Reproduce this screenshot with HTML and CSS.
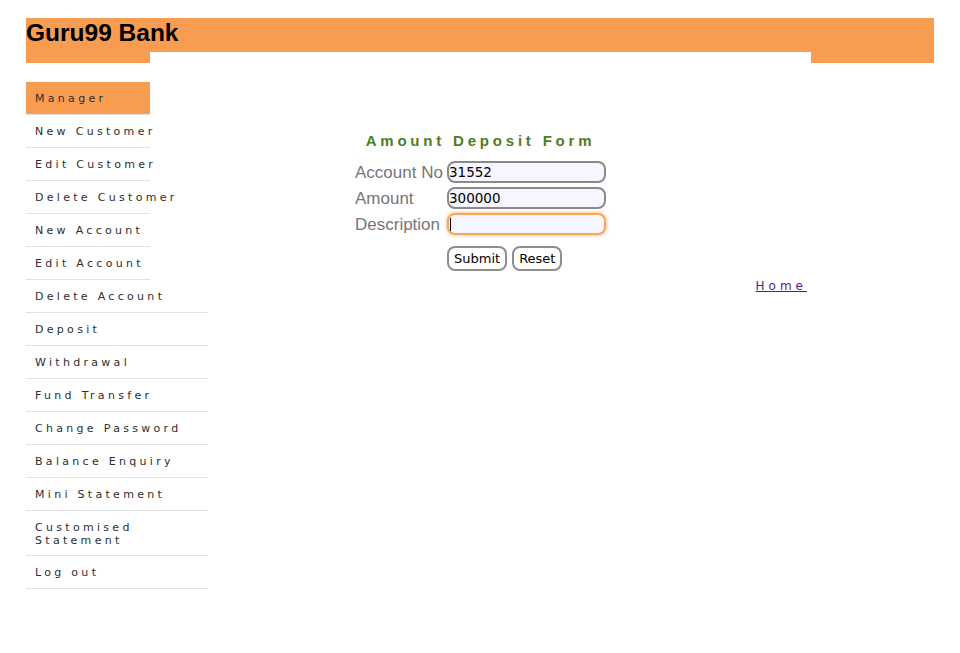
FILE: index.html
```html
<!DOCTYPE html>
<html>
<head>
<meta charset="utf-8">
<title>Guru99 Bank Amount Deposit</title>
<link rel="stylesheet" href="styles.css">
</head>
<body>
<div class="page">
  <header class="topbar">
    <h2 class="brand">Guru99 Bank</h2>
    <div class="strip"><span class="strip-gap"></span></div>
  </header>
  <div class="content">
    <ul class="menu">
      <li class="item narrow active"><a href="#">Manager</a></li>
      <li class="item narrow"><a href="#">New Customer</a></li>
      <li class="item narrow"><a href="#">Edit Customer</a></li>
      <li class="item narrow"><a href="#">Delete Customer</a></li>
      <li class="item narrow"><a href="#">New Account</a></li>
      <li class="item narrow"><a href="#">Edit Account</a></li>
      <li class="item"><a href="#">Delete Account</a></li>
      <li class="item"><a href="#">Deposit</a></li>
      <li class="item"><a href="#">Withdrawal</a></li>
      <li class="item"><a href="#">Fund Transfer</a></li>
      <li class="item"><a href="#">Change Password</a></li>
      <li class="item"><a href="#">Balance Enquiry</a></li>
      <li class="item"><a href="#">Mini Statement</a></li>
      <li class="item multi"><a href="#">Customised Statement</a></li>
      <li class="item"><a href="#">Log out</a></li>
    </ul>
    <main class="main">
      <form class="deposit">
        <p class="heading">Amount Deposit Form</p>
        <div class="grid">
          <label class="label">Account No</label>
          <input class="field" type="text" value="31552">
          <label class="label">Amount</label>
          <input class="field" type="text" value="300000">
          <label class="label">Description</label>
          <div class="field focused"><span class="caret"></span></div>
          <span></span>
          <div class="buttons">
            <button class="btn" type="button">Submit</button>
            <button class="btn" type="button">Reset</button>
          </div>
        </div>
      </form>
      <div class="home-row"><a class="home" href="#">Home</a></div>
    </main>
  </div>
</div>
</body>
</html>
```

FILE: styles.css
```css
html, body {
  margin: 0;
  padding: 0;
  background: #ffffff;
}

.page {
  padding: 18px 26px 0 26px;
}

.topbar {
  width: 908px;
  background: #f89c51;
}

.brand {
  margin: 0;
  font-family: "Liberation Sans", Arial, sans-serif;
  font-weight: bold;
  font-size: 24.5px;
  line-height: 30px;
  padding-bottom: 4px;
  color: #000;
}

.strip {
  height: 11px;
  display: flex;
}

.strip-gap {
  display: block;
  margin-left: 124px;
  width: 661px;
  height: 11px;
  background: #ffffff;
}

.content {
  display: flex;
  margin-top: 19px;
}

.menu {
  list-style: none;
  margin: 0;
  padding: 0;
  width: 182px;
  flex: none;
}

.item {
  width: 182px;
  border-bottom: 1px solid #e2e2e2;
}

.item.narrow {
  width: 124px;
}

.item a {
  display: block;
  height: 31px;
  line-height: 31px;
  padding: 1px 0 0 9px;
  font-family: "DejaVu Sans", Verdana, sans-serif;
  font-size: 11px;
  letter-spacing: 3.3px;
  color: #2e2e2e;
  text-decoration: none;
  white-space: nowrap;
}

.item.active {
  background: #f89c51;
}

.item.multi a {
  height: auto;
  white-space: normal;
  line-height: 13.5px;
  padding: 9.5px 20px 7.5px 9px;
}

.main {
  flex: 1;
}

.deposit {
  margin: 0 0 0 147px;
  width: 251px;
}

.heading {
  margin: 50px 0 0 0;
  text-align: center;
  font-family: "Liberation Sans", Arial, sans-serif;
  font-weight: bold;
  font-size: 15px;
  line-height: 18px;
  letter-spacing: 3.8px;
  color: #4f7d22;
}

.grid {
  display: grid;
  grid-template-columns: 92px 159px;
  row-gap: 4px;
  margin-top: 11px;
  align-items: center;
}

.label {
  font-family: "Liberation Sans", Arial, sans-serif;
  font-size: 17px;
  color: #767676;
  white-space: nowrap;
  position: relative;
  top: 1px;
}

.field {
  box-sizing: border-box;
  width: 159px;
  height: 22px;
  margin: 0;
  padding: 0;
  border: 2px solid #8a8a8a;
  border-radius: 8px;
  background: #f5f6ff;
  font-family: "DejaVu Sans", Verdana, sans-serif;
  font-size: 13.5px;
  color: #000;
  outline: none;
}

.field.focused {
  display: flex;
  align-items: center;
  padding-left: 1px;
  border-color: #f8a75a;
  box-shadow: 0 0 3px 1px rgba(248, 156, 81, 0.55);
}

.caret {
  display: block;
  width: 1px;
  height: 13px;
  background: #000;
}

.buttons {
  display: flex;
  gap: 5px;
  margin-top: 7px;
}

.btn {
  height: 25px;
  padding: 0 5px;
  border: 2px solid #8e8e8e;
  border-radius: 8px;
  background: #ffffff;
  font-family: "DejaVu Sans", Verdana, sans-serif;
  font-size: 13px;
  color: #000;
}

.home-row {
  width: 599px;
  text-align: right;
  margin-top: 5px;
}

.home {
  font-family: "DejaVu Sans", Verdana, sans-serif;
  font-size: 12px;
  letter-spacing: 4px;
  color: #551a8b;
}
```
